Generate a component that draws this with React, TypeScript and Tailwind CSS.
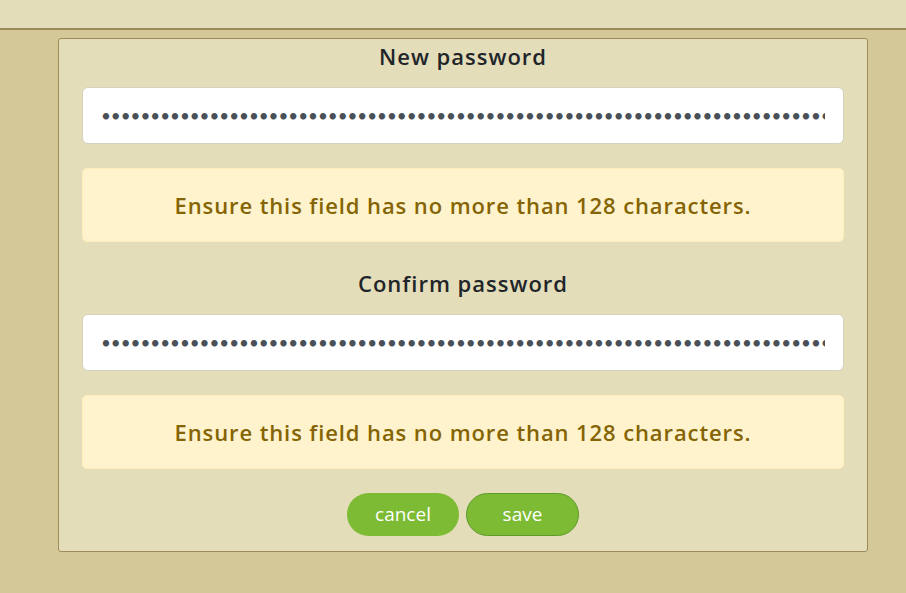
import { FC } from "react";

const longValue = "x".repeat(160);

const PasswordField: FC<{ label: string }> = ({ label }) => {
  return (
    <div className="flex flex-col items-center">
      <label className="text-[22px] font-semibold tracking-[1px] text-[#212529] leading-[34px] mb-[14px]">
        {label}
      </label>
      <input
        type="password"
        readOnly
        defaultValue={longValue}
        className="w-full h-[57px] bg-white rounded-[6px] border border-[#d6d2c0] px-[18px] text-[17px] text-[#495057] outline-none"
        style={{ fontFamily: "Lato, sans-serif" }}
      />
      <div className="w-full mt-[24px] h-[74px] rounded-[5px] bg-[#fff3cd] border border-[#ffeeba] flex items-center justify-center text-[22px] font-semibold tracking-[0.9px] text-[#856404]">
        Ensure this field has no more than 128 characters.
      </div>
    </div>
  );
};

export default function App() {
  return (
    <div
      className="w-[906px] h-[593px] bg-[#d4c898] overflow-hidden"
      style={{ fontFamily: "'Open Sans', Lato, sans-serif" }}
    >
      <div className="h-[30px] bg-[#e4ddb9] border-b-2 border-[#9c8b58]" />
      <div className="mx-[58px] mt-[8px] w-[810px] rounded-[3px] border border-[#9d8b5a] bg-[#e4ddb9] px-[23px] pt-0 pb-[15px]">
        <div className="flex flex-col gap-[24px]">
          <PasswordField label="New password" />
          <PasswordField label="Confirm password" />
        </div>
        <div className="flex justify-center gap-[7px] mt-[24px]">
          <button className="w-[112px] h-[43px] rounded-full bg-[#7dbb35] text-white text-[19px]">
            cancel
          </button>
          <button className="w-[113px] h-[43px] rounded-full bg-[#7dbb35] border border-[#5c9a2a] text-white text-[19px]">
            save
          </button>
        </div>
      </div>
    </div>
  );
}
